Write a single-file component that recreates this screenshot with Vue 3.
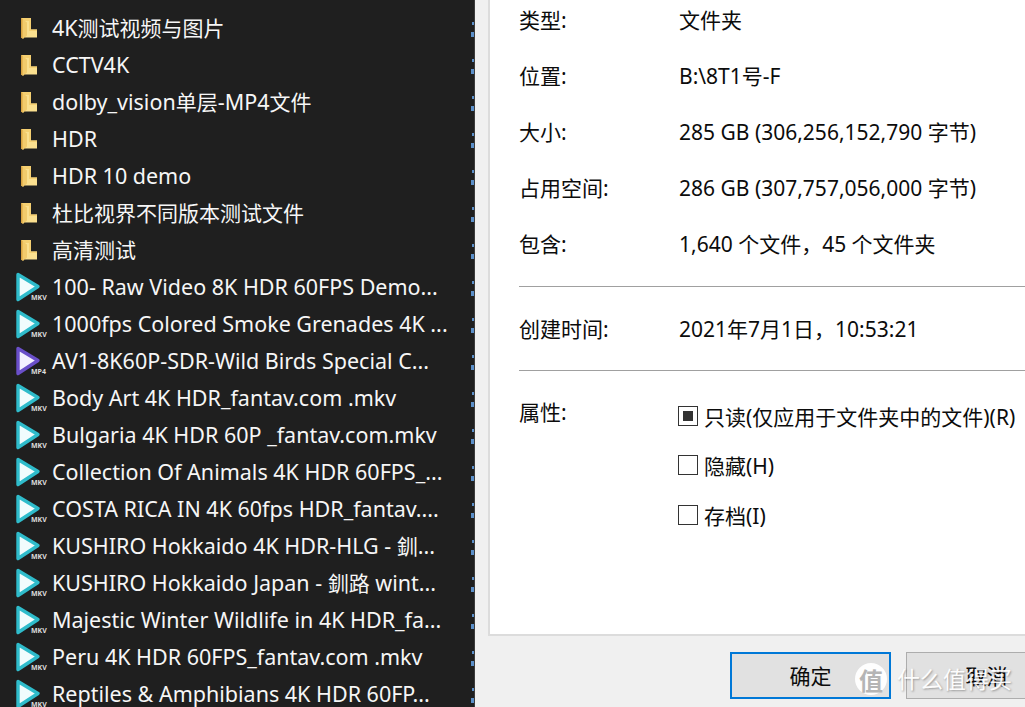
<script setup>
const folders = ['4K测试视频与图片','CCTV4K','dolby_vision单层-MP4文件','HDR','HDR 10 demo','杜比视界不同版本测试文件','高清测试']
const files = [
  ['100- Raw Video 8K HDR 60FPS Demo...','MKV'],
  ['1000fps Colored Smoke Grenades 4K ...','MKV'],
  ['AV1-8K60P-SDR-Wild Birds Special C...','MP4'],
  ['Body Art 4K HDR_fantav.com .mkv','MKV'],
  ['Bulgaria 4K HDR 60P _fantav.com.mkv','MKV'],
  ['Collection Of Animals 4K HDR 60FPS_...','MKV'],
  ['COSTA RICA IN 4K 60fps HDR_fantav....','MKV'],
  ['KUSHIRO Hokkaido 4K HDR-HLG - 釧...','MKV'],
  ['KUSHIRO Hokkaido Japan - 釧路 wint...','MKV'],
  ['Majestic Winter Wildlife in 4K HDR_fa...','MKV'],
  ['Peru 4K HDR 60FPS_fantav.com .mkv','MKV'],
  ['Reptiles & Amphibians 4K HDR 60FP...','MKV'],
]
const info = [
  ['类型:','文件夹'],
  ['位置:','B:\\8T1号-F'],
  ['大小:','285 GB (306,256,152,790 字节)'],
  ['占用空间:','286 GB (307,757,056,000 字节)'],
  ['包含:','1,640 个文件，45 个文件夹'],
]
const attrs = [
  ['只读(仅应用于文件夹中的文件)(R)', true],
  ['隐藏(H)', false],
  ['存档(I)', false],
]
// Latin runs are a touch larger than CJK runs in the file list
const runs = (s) => s.split(/([\u3000-\u9fff\uff00-\uffef]+)/).filter(Boolean).map((t) => ({ t, cjk: /[\u3000-\u9fff\uff00-\uffef]/.test(t) }))
</script>

<template>
  <div class="screen">
    <aside class="list">
      <div v-for="name in folders" :key="name" class="row">
        <svg class="folder" width="18" height="24" viewBox="0 0 18 24">
          <path d="M1 2 H11 V13.5 H17 V21.5 H5 V2 Z" fill="#fbe08f"/>
          <path d="M1 2 H11 V13.5 H17 V15 H9 V5 H3 Z" fill="#f5d072"/>
          <path d="M1 2 L7 6.5 V19.5 L3 23 L1 21.5 Z" fill="#f2cb6c"/>
          <path d="M1 2 L2.5 3 V22.5 L1 21.5 Z" fill="#d9a441"/>
        </svg>
        <span class="name"><span v-for="(r, i) in runs(name)" :key="i" :class="{ cjk: r.cjk }">{{ r.t }}</span></span>
      </div>
      <div v-for="[name, ext] in files" :key="name" class="row">
        <span class="vid">
          <svg width="28" height="32" viewBox="0 0 28 32">
            <path d="M4 3.5 L24 15.5 L4 28.5 Z" :fill="ext === 'MP4' ? '#f4f1ff' : '#f1fcfd'" :stroke="ext === 'MP4' ? '#6a4fc9' : '#2fbccb'" stroke-width="3.4" stroke-linejoin="round"/>
          </svg>
          <span class="ext">{{ ext }}</span>
        </span>
        <span class="name"><span v-for="(r, i) in runs(name)" :key="i" :class="{ cjk: r.cjk }">{{ r.t }}</span></span>
      </div>
      <div class="marks">
        <div v-for="n in 19" :key="n" class="mark"><i></i><b></b></div>
      </div>
    </aside>

    <main class="dialog">
      <section class="sheet">
        <div class="group">
          <div v-for="[k, v] in info" :key="k" class="prop"><span class="key">{{ k }}</span><span>{{ v }}</span></div>
        </div>
        <hr />
        <div class="prop created"><span class="key">创建时间:</span><span>2021年7月1日，10:53:21</span></div>
        <hr />
        <div class="attrs">
          <span class="key">属性:</span>
          <div class="checks">
            <div v-for="[label, on] in attrs" :key="label" class="check">
              <span class="box"><i v-if="on"></i></span>
              <span>{{ label }}</span>
            </div>
          </div>
        </div>
      </section>
      <footer class="actions">
        <button class="btn primary">确定</button>
        <button class="btn">取消</button>
      </footer>
      <div class="mark-logo">
        <span class="seal">值</span>
        <span class="brand">什么值得买</span>
      </div>
    </main>
  </div>
</template>

<style>
html, body { margin: 0; overflow: hidden; background: #f0f0f0; }
</style>

<style scoped>
.screen {
  width: 1025px; height: 707px; display: flex; overflow: hidden;
  font-family: "Noto Sans", "Noto Sans CJK SC", sans-serif;
}
.list {
  position: relative; width: 475px; height: 707px; flex: none; box-sizing: border-box;
  padding-top: 9.5px; background: #1f1f1f; color: #f6f6f6; overflow: hidden;
  font-size: 21.5px; border-right: 1px solid #3c3c3c;
}
.row { height: 37px; display: flex; align-items: center; white-space: nowrap; }
.cjk { font-size: 21px; }
.folder { margin-left: 20px; margin-right: 14px; flex: none; }
.vid { position: relative; width: 52px; height: 32px; flex: none; }
.vid svg { position: absolute; left: 14px; top: 0; }
.ext {
  position: absolute; left: 30px; top: 23px; font-size: 7px; line-height: 8px;
  font-weight: 700; color: #dcdcdc; background: #1f1f1f; padding: 0 1px;
}
.name { line-height: 28px; }
.marks { position: absolute; right: 0; top: 22px; width: 6px; }
.mark { height: 37px; position: relative; }
.mark i, .mark b { position: absolute; right: 0; width: 2px; background: #5b8fc9; }
.mark i { top: 0; height: 3px; }
.mark b { top: 10px; height: 5px; width: 3px; }

.dialog { position: relative; flex: 1; display: flex; flex-direction: column; background: #f0f0f0; color: #0c0c0c; font-size: 21px; }
.sheet {
  margin-left: 13px; height: 636px; flex: none; box-sizing: border-box; padding: 0 0 0 29px;
  background: #fff; border-left: 2px solid #dcdcdc; border-bottom: 2px solid #dcdcdc;
}
.prop { display: flex; height: 56px; align-items: center; white-space: nowrap; }
.group .prop:first-child { margin-top: -9px; }
.key { width: 160px; flex: none; }
.created { height: 83px; box-sizing: border-box; padding-bottom: 2px; }
hr { margin: 0; border: 0; border-top: 1px solid #a0a0a0; }
.group + hr { margin-top: 15px; }
.attrs { display: flex; padding-top: 25px; white-space: nowrap; }
.checks { display: flex; flex-direction: column; margin-top: -5px; margin-left: -1px; }
.check { height: 49.5px; display: flex; align-items: center; gap: 6px; }
.box {
  width: 20px; height: 20px; box-sizing: border-box; border: 1px solid #333; background: #fff;
  display: flex; align-items: center; justify-content: center;
}
.box i { width: 10px; height: 10px; background: #333; }
.actions { display: flex; gap: 15px; padding: 16px 0 0 255px; }
.btn {
  width: 161px; height: 47px; flex: none; box-sizing: border-box; background: #e1e1e1;
  border: 1px solid #adadad; font: inherit; font-size: 21px; color: #0c0c0c; padding: 0 0 2px;
}
.primary { border: 2px solid #0078d7; }
.mark-logo {
  position: absolute; left: 380px; top: 663px; display: flex; align-items: center; gap: 10px;
  color: #fff; pointer-events: none;
}
.seal {
  width: 32px; height: 32px; border-radius: 50%; background: rgba(255,255,255,.95); color: #b5b5b5;
  display: flex; align-items: center; justify-content: center; font-size: 24px; font-weight: 700;
}
.brand { font-size: 23px; line-height: 32px; opacity: .9; text-shadow: 1px 1px 2px rgba(0,0,0,.35); }
</style>
